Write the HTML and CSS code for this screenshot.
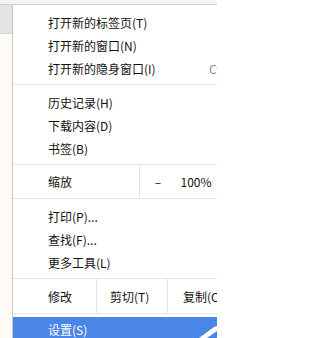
FILE: index.html
```html
<!DOCTYPE html>
<html lang="zh-CN">
<head>
<meta charset="utf-8">
<link rel="stylesheet" href="styles.css">
</head>
<body>
<div class="top"></div>
<div class="main">
  <div class="side"><div class="side-tab"></div></div>
  <div class="menu">
    <div class="group">
      <div class="item"><span>打开新的标签页(T)</span></div>
      <div class="item"><span>打开新的窗口(N)</span></div>
      <div class="item"><span>打开新的隐身窗口(I)</span><span class="key">Ctrl+Shift+N</span></div>
    </div>
    <div class="sep"></div>
    <div class="group">
      <div class="item"><span>历史记录(H)</span></div>
      <div class="item"><span>下载内容(D)</span></div>
      <div class="item"><span>书签(B)</span></div>
    </div>
    <div class="sep"></div>
    <div class="row zoom">
      <div class="label">缩放</div>
      <div class="btn minus">–</div>
      <div class="pct">100%</div>
    </div>
    <div class="sep"></div>
    <div class="group">
      <div class="item"><span>打印(P)...</span></div>
      <div class="item"><span>查找(F)...</span></div>
      <div class="item"><span>更多工具(L)</span></div>
    </div>
    <div class="sep"></div>
    <div class="row edit">
      <div class="label">修改</div>
      <div class="btn cut">剪切(T)</div>
      <div class="btn copy">复制(C)</div>
    </div>
    <div class="sep"></div>
    <div class="group last">
      <div class="item active"><span>设置(S)</span></div>
    </div>
  </div>
</div>
<svg class="cursor" width="18" height="15" viewBox="0 0 18 15">
  <polygon points="0,15 15,4 18,3 18,8 8,15" fill="#ffffff"/>
</svg>
</body>
</html>
```

FILE: styles.css
```css
html, body {
  margin: 0;
  padding: 0;
  overflow: hidden;
}
body {
  width: 217px;
  height: 338px;
  position: relative;
  background: #ffffff;
  font-family: "Noto Sans CJK SC", "Microsoft YaHei", sans-serif;
  font-size: 12px;
  color: #111111;
}
.top {
  height: 4px;
  background: #f4f4f4;
  border-bottom: 1px solid #cfcfcf;
}
.main {
  display: flex;
  width: 217px;
  height: 333px;
  overflow: hidden;
}
.side {
  flex: none;
  width: 12px;
  background: #fdfbf3;
}
.side-tab {
  height: 28px;
  background: #e3e3e3;
  border-bottom: 1px solid #d4d4d4;
}
.menu {
  flex: none;
  width: 286px;
  background: #ffffff;
  border-left: 1px solid #c6c6c6;
}
.group {
  padding: 6px 0 4px;
}
.group.last {
  padding-top: 3px;
  padding-bottom: 0;
}
.item {
  display: flex;
  align-items: center;
  height: 23px;
  line-height: 23px;
  padding-left: 35px;
  padding-right: 22px;
  white-space: nowrap;
}
.item.active {
  height: 24px;
  background: #4a86e8;
  color: #ffffff;
}
.key {
  margin-left: auto;
  color: #8c8c8c;
}
.sep {
  height: 1px;
  background: #e6e6e6;
}
.row {
  display: flex;
  align-items: stretch;
  white-space: nowrap;
}
.row.zoom {
  height: 33px;
}
.row.edit {
  height: 34px;
}
.label {
  box-sizing: border-box;
  padding-left: 35px;
  display: flex;
  align-items: center;
}
.zoom .label {
  width: 126px;
}
.edit .label {
  width: 83px;
}
.btn {
  box-sizing: border-box;
  border-left: 1px solid #e6e6e6;
  display: flex;
  align-items: center;
}
.minus {
  width: 37px;
  justify-content: center;
}
.pct {
  width: 40px;
  display: flex;
  align-items: center;
  justify-content: center;
}
.cut, .copy {
  width: 71px;
  padding-left: 13px;
}
.copy {
  padding-left: 15px;
}
.cursor {
  position: absolute;
  right: 0;
  bottom: 0;
}
```
